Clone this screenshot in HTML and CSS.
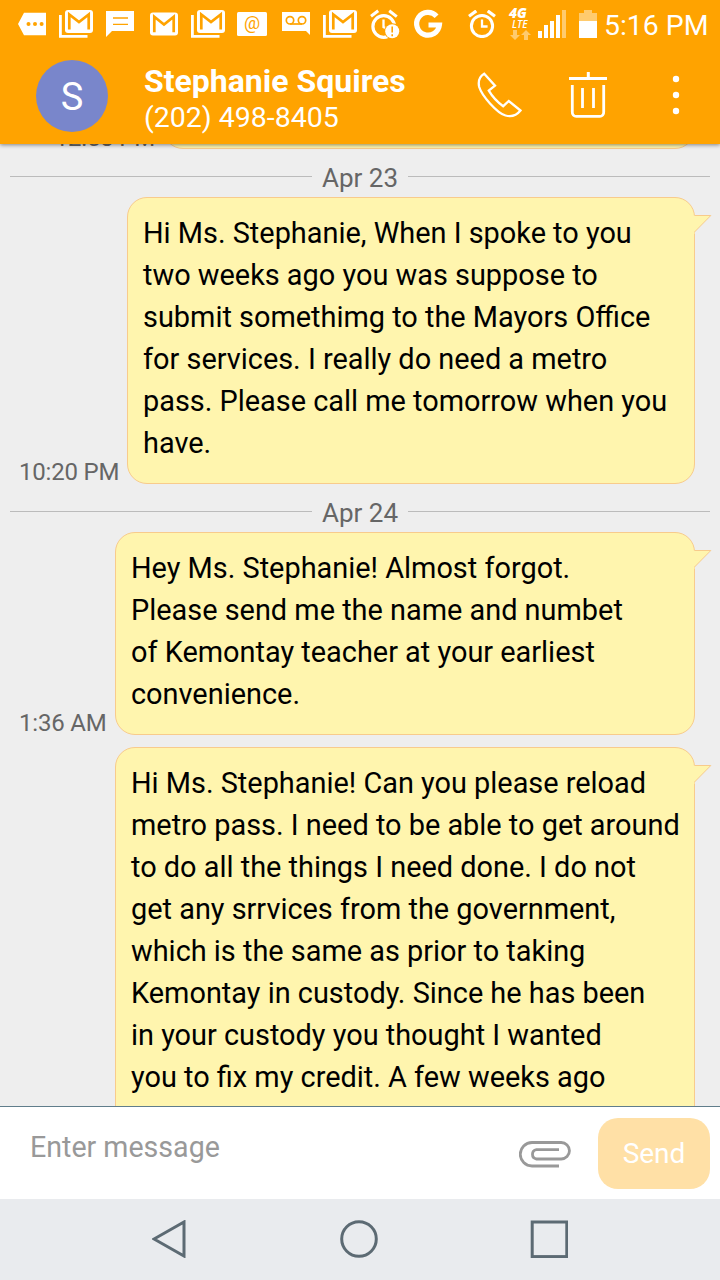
FILE: index.html
```html
<!DOCTYPE html>
<html lang="en">
<head>
    <meta charset="UTF-8">
    <meta name="viewport" content="width=device-width, initial-scale=1.0">
    <title>Messages</title>
    <link rel="stylesheet" href="styles.css">
</head>
<body>
    <!-- reused status icon -->
    <svg class="defs">
        <symbol id="gmail-stack" viewBox="0 0 44 48">
            <path d="M6.4 15V36.4H33.5" fill="none" stroke="#fff" stroke-width="2.8"/>
            <rect x="11" y="10" width="28" height="23" rx="3" fill="#fff"/>
            <path d="M15.3 29.5V14.5L25 22L34.7 14.5V29.5" fill="none" stroke="#ffa300" stroke-width="2.7"/>
        </symbol>
    </svg>

    <header class="header">
        <div class="status-bar">
            <div class="notifications">
                <svg viewBox="0 0 44 48"><path d="M8 24L14 12.7H36V35.3H14Z" fill="#fff"/><g fill="#ffa300"><circle cx="18.5" cy="24" r="2"/><circle cx="25" cy="24" r="2"/><circle cx="31.6" cy="24" r="2"/></g></svg>
                <svg><use href="#gmail-stack"/></svg>
                <svg viewBox="0 0 44 48"><path d="M8 11H36V31H14L8 37Z" fill="#fff"/><path d="M15 18H30M15 24.3H30" stroke="#ffa300" stroke-width="1.3"/></svg>
                <svg viewBox="0 0 44 48"><rect x="8" y="12.5" width="28" height="23" rx="3" fill="#fff"/><path d="M12.3 32.3V16.8L22 24.5L31.7 16.8V32.3" fill="none" stroke="#ffa300" stroke-width="2.7"/></svg>
                <svg><use href="#gmail-stack"/></svg>
                <svg viewBox="0 0 44 48"><rect x="7" y="12" width="30" height="24" rx="1.5" fill="#fff"/><text x="22" y="29" class="at">@</text></svg>
                <svg viewBox="0 0 44 48"><path d="M8 12H36V35L32 31H8Z" fill="#fff"/><g fill="none" stroke="#ffa300" stroke-width="1.7"><circle cx="16" cy="20.3" r="3.7"/><circle cx="28" cy="20.3" r="3.7"/><path d="M16 24H28"/></g></svg>
                <svg><use href="#gmail-stack"/></svg>
                <svg viewBox="0 0 44 48"><g fill="none" stroke="#fff"><circle cx="21.7" cy="26.5" r="10.8" stroke-width="3.2"/><path d="M9 16.2L16.2 10.8M27.2 10.8L34.8 16.6" stroke-width="3"/><path d="M21.5 19.5V27L25 29" stroke-width="2.3"/></g><circle cx="30.2" cy="31.2" r="8" fill="#ffa300"/><circle cx="30.2" cy="31.2" r="7" fill="#fff"/><path d="M30.2 26.4V32.6M30.2 34.2V36.2" stroke="#ffa300" stroke-width="1.6"/></svg>
                <svg viewBox="0 0 44 48"><path d="M30.6 16.2A11.4 11.4 0 1 0 33.4 25H22.5" fill="none" stroke="#fff" stroke-width="5.2"/></svg>
            </div>
            <div class="system">
                <svg class="alarm" viewBox="0 0 28 28"><g fill="none" stroke="#fff"><circle cx="14" cy="16" r="10.6" stroke-width="3"/><path d="M1 6.2L8.3 .9M19.7 .9L27 6.2" stroke-width="3.2"/><path d="M14 9.5V16.5H19.6" stroke-width="2.3"/></g></svg>
                <div class="network">
                    <span class="network-gen">4G</span>
                    <span class="network-type">LTE</span>
                    <svg class="arrows" viewBox="0 0 22 10"><path d="M4 0H8V5H11L6 10L1 5H4ZM15 10V5H12L17 0L22 5H19V10Z" fill="#ffcb6e"/></svg>
                </div>
                <svg class="signal" viewBox="0 0 28 28"><path d="M0 21H4V28H0ZM6 15H10V28H6ZM12 11H16V28H12ZM18 5H22V28H18Z" fill="#fff"/><path d="M24 0H28V28H24Z" fill="#ffcb6e"/></svg>
                <svg class="battery" viewBox="0 0 18 28"><path d="M5 0H13V3H18V11H0V3H5Z" fill="#ffcb6e"/><path d="M0 11H18V28H0Z" fill="#fff"/></svg>
                <span class="clock">5:16 PM</span>
            </div>
        </div>
        <div class="contact-bar">
            <div class="avatar">S</div>
            <div class="contact">
                <div class="contact-name">Stephanie Squires</div>
                <div class="contact-phone">(202) 498-8405</div>
            </div>
            <div class="actions">
                <svg class="call" viewBox="0 0 46 46"><path d="M7.2 1.7C2.5 4.5 1 9.5 2.2 15C5 24 20 41 28.5 43.5C34 45 39.5 43.5 43.5 38.5L31.8 29L26.2 34.2C21 30.5 15 24 11.8 18.6L18 13.7Z" fill="none" stroke="#fff" stroke-width="2.3"/></svg>
                <svg class="trash" viewBox="0 0 38 46"><g fill="none" stroke="#fff"><path d="M19.3 0V6" stroke-width="3"/><path d="M0 6.5H38M3.3 13V40A4 4 0 0 0 7.3 44.4H30.7A4 4 0 0 0 34.7 40V13M13.5 16V36M24.5 16V36" stroke-width="2.8"/></g></svg>
                <svg class="more" viewBox="0 0 8 40"><g fill="#fff"><circle cx="4" cy="4" r="3.2"/><circle cx="4" cy="20" r="3.2"/><circle cx="4" cy="36" r="3.2"/></g></svg>
            </div>
        </div>
    </header>

    <main class="thread">
        <div class="row row-cut">
            <span class="time time-cut">12:58 PM</span>
            <div class="bubble bubble-cut"></div>
        </div>

        <div class="date">Apr 23</div>

        <div class="row">
            <span class="time">10:20 PM</span>
            <div class="bubble">
                <svg class="tail" viewBox="0 0 19 20"><path d="M0 1.5H17.8L1.5 18V20H0Z" fill="#fff5ae"/><path d="M1.5 1.5H17.8L1.5 18" fill="none" stroke="#f8cb8c"/></svg>
                Hi Ms. Stephanie, When I spoke to you<br>
                two weeks ago you was suppose to<br>
                submit somethimg to the Mayors Office<br>
                for services. I really do need a metro<br>
                pass. Please call me tomorrow when you<br>
                have.
            </div>
        </div>

        <div class="date">Apr 24</div>

        <div class="row">
            <span class="time">1:36 AM</span>
            <div class="bubble bubble-wide">
                <svg class="tail" viewBox="0 0 19 20"><path d="M0 1.5H17.8L1.5 18V20H0Z" fill="#fff5ae"/><path d="M1.5 1.5H17.8L1.5 18" fill="none" stroke="#f8cb8c"/></svg>
                Hey Ms. Stephanie! Almost forgot.<br>
                Please send me the name and numbet<br>
                of Kemontay teacher at your earliest<br>
                convenience.
            </div>
        </div>

        <div class="row row-next">
            <div class="bubble bubble-wide bubble-open">
                <svg class="tail" viewBox="0 0 19 20"><path d="M0 1.5H17.8L1.5 18V20H0Z" fill="#fff5ae"/><path d="M1.5 1.5H17.8L1.5 18" fill="none" stroke="#f8cb8c"/></svg>
                Hi Ms. Stephanie! Can you please reload<br>
                metro pass. I need to be able to get around<br>
                to do all the things I need done. I do not<br>
                get any srrvices from the government,<br>
                which is the same as prior to taking<br>
                Kemontay in custody. Since he has been<br>
                in your custody you thought I wanted<br>
                you to fix my credit. A few weeks ago
            </div>
        </div>
    </main>

    <div class="compose">
        <div class="placeholder">Enter message</div>
        <svg class="clip" viewBox="0 0 52 27"><path d="M40 25H13A11.7 11.7 0 0 1 13 1.5H42.2A8.2 8.2 0 0 1 42.2 18H17.5A4.7 4.7 0 0 1 17.5 8.7H40" fill="none" stroke="#999" stroke-width="2.8"/></svg>
        <button class="send">Send</button>
    </div>

    <nav class="nav">
        <svg class="back" viewBox="0 0 34 38"><path d="M32 2V36L2 19Z"/></svg>
        <svg class="home" viewBox="0 0 38 38"><circle cx="19" cy="19" r="17.3"/></svg>
        <svg class="recent" viewBox="0 0 38 38"><rect x="2.2" y="2" width="34.6" height="34.6"/></svg>
    </nav>
</body>
</html>
```
FILE: styles.css
```css
* {
    box-sizing: border-box;
}
body {
    margin: 0;
    width: 720px;
    height: 1280px;
    display: flex;
    flex-direction: column;
    overflow: hidden;
    font-family: Roboto, "Liberation Sans", sans-serif;
    background: #eee;
}
svg {
    display: block;
    flex: none;
}
.defs {
    display: none;
}
.header {
    position: relative;
    z-index: 1;
    height: 144px;
    flex: none;
    background: #ffa300;
    color: #fff;
    box-shadow: 0 1px 4px rgba(0, 0, 0, 0.45);
}
.status-bar {
    height: 48px;
    display: flex;
    padding-left: 10px;
}
.notifications {
    display: flex;
}
.notifications svg {
    width: 44px;
    height: 48px;
}
.at {
    font-size: 18px;
    text-anchor: middle;
    fill: #ffa300;
}
.system {
    display: flex;
    align-items: center;
    margin-left: 18px;
}
.alarm {
    width: 28px;
    height: 28px;
}
.network {
    width: 22px;
    height: 32px;
    margin: 0 7px 4px 13px;
    display: flex;
    flex-direction: column;
    font-family: "Open Sans", sans-serif;
    font-style: italic;
}
.network-gen {
    height: 13px;
    font-size: 14px;
    font-weight: 800;
    line-height: 13px;
}
.network-type {
    height: 10px;
    padding-left: 3px;
    font-size: 10px;
    font-weight: 600;
    line-height: 11px;
}
.arrows {
    width: 22px;
    height: 10px;
    margin-top: 1px;
}
.signal {
    width: 28px;
    height: 28px;
}
.battery {
    width: 18px;
    height: 28px;
    margin: 0 7px 0 13px;
}
.clock {
    font-size: 28.4px;
    line-height: 48px;
    padding-top: 3px;
    white-space: nowrap;
}
.contact-bar {
    height: 96px;
    display: flex;
    align-items: center;
    padding-left: 36px;
}
.avatar {
    width: 72px;
    height: 72px;
    border-radius: 50%;
    background: #7986cb;
    font-size: 38px;
    line-height: 75px;
    text-align: center;
}
.contact {
    width: 369px;
    padding: 6px 0 0 36px;
}
.contact-name {
    font-size: 32px;
    font-weight: bold;
    line-height: 36px;
}
.contact-phone {
    font-size: 28.5px;
    line-height: 37px;
}
.actions {
    display: flex;
    align-items: center;
    padding-bottom: 2px;
}
.call {
    width: 46px;
    height: 46px;
}
.trash {
    width: 38px;
    height: 46px;
    margin: 0 65px 0 46px;
}
.more {
    width: 8px;
    height: 40px;
}
.thread {
    height: 962px;
    flex: none;
    overflow: hidden;
}
.row {
    display: flex;
    align-items: flex-end;
    justify-content: flex-end;
    padding: 0 25px 0 19px;
}
.row-next {
    margin-top: 12px;
}
.row-cut {
    height: 5px;
}
.time {
    flex: 1;
    font-size: 24px;
    line-height: 24px;
    letter-spacing: -0.2px;
    white-space: nowrap;
    color: #666;
}
.time-cut {
    margin-bottom: -1px;
    padding-right: 8px;
    text-align: right;
}
.bubble {
    position: relative;
    width: 568px;
    padding: 14px 15px 19px;
    border: 1px solid #f8cb8c;
    border-radius: 20px;
    background: #fff5ae;
    color: #000;
    font-size: 28.9px;
    line-height: 42px;
    white-space: nowrap;
}
.bubble-wide {
    width: 580px;
}
.bubble-cut {
    width: 532px;
    height: 50px;
}
/* the message goes on below the compose bar */
.bubble-open {
    padding-bottom: 60px;
}
/* sits over the right border of the bubble */
.tail {
    position: absolute;
    top: 16px;
    right: -18px;
    width: 19px;
    height: 20px;
}
.date {
    height: 48px;
    display: flex;
    align-items: center;
    gap: 10px;
    padding: 10px 10px 0;
    color: #666;
    font-size: 26px;
}
.date::before,
.date::after {
    content: "";
    flex: 1;
    height: 1px;
    margin-bottom: 4px;
    background: #bbb;
}
.compose {
    height: 93px;
    flex: none;
    display: flex;
    align-items: center;
    border-top: 1px solid #607d8b;
    background: #fff;
    padding: 0 10px 0 30px;
}
.placeholder {
    flex: 1;
    padding-bottom: 12px;
    color: #999;
    font-size: 28.6px;
}
.clip {
    width: 52px;
    height: 27px;
    margin: 3px 27px 0 0;
}
.send {
    width: 112px;
    height: 71px;
    border: none;
    border-radius: 20px;
    background: #ffe0a6;
    color: #fff;
    font-family: inherit;
    font-size: 28px;
}
.nav {
    flex: 1;
    display: flex;
    align-items: center;
    padding: 0 0 1px 152px;
    background: #e9ebee;
}
.nav path,
.nav circle,
.nav rect {
    fill: none;
    stroke: #5c6a73;
    stroke-width: 3;
}
.back {
    width: 34px;
    height: 38px;
}
.home {
    width: 38px;
    height: 38px;
    margin: 0 152px 0 154px;
}
.recent {
    width: 38px;
    height: 38px;
}
```
